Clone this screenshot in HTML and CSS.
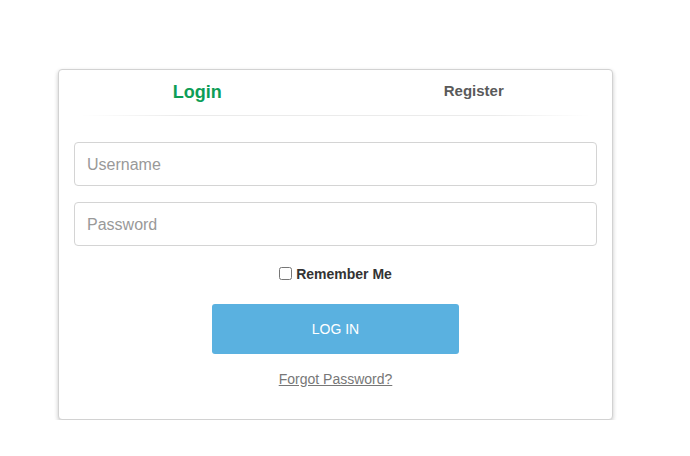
FILE: index.html
```html
<!DOCTYPE html>
<html lang="en">
<head>
<meta charset="utf-8">
<title>Login</title>
<link rel="stylesheet" href="styles.css">
</head>
<body>
<div class="page">
  <div class="card">
    <div class="tabs">
      <div class="tab tab-active">Login</div>
      <div class="tab">Register</div>
    </div>
    <div class="sep"></div>
    <form class="form">
      <input class="field" type="text" placeholder="Username">
      <input class="field" type="password" placeholder="Password">
      <label class="remember"><input type="checkbox" class="check"> Remember Me</label>
      <button type="button" class="btn">LOG IN</button>
      <a href="#" class="forgot">Forgot Password?</a>
    </form>
  </div>
</div>
</body>
</html>
```

FILE: styles.css
```css
* { box-sizing: border-box; }
html, body { margin: 0; background: #fff; }
body { font-family: "Liberation Sans", Arial, sans-serif; }
.page { padding: 69px 0 0 58px; }
.card {
  width: 555px;
  height: 351px;
  border: 1px solid #d2d2d2;
  border-radius: 4px;
  box-shadow: 0 2px 4px rgba(0,0,0,0.22);
  background: #fff;
}
.tabs { display: flex; height: 45px; }
.tab {
  flex: 1;
  display: flex;
  align-items: center;
  justify-content: center;
  font-weight: bold;
  font-size: 15px;
  color: #5a5a5a;
  padding-bottom: 5px;
}
.tab-active { font-size: 18px; color: #0d9e57; padding-bottom: 1px; }
.sep {
  height: 1px;
  margin: 0 22px;
  background: linear-gradient(to right, rgba(230,230,230,0), #ebebeb 20%, #ebebeb 80%, rgba(230,230,230,0));
}
.form {
  display: flex;
  flex-direction: column;
  align-items: center;
  padding: 26px 15px 0;
}
.field {
  width: 100%;
  height: 44px;
  border: 1px solid #d4d4d4;
  border-radius: 4px;
  padding: 2px 12px 0;
  font-family: inherit;
  font-size: 16px;
  color: #333;
  margin-bottom: 16px;
}
.field::placeholder { color: #999; }
.remember {
  display: flex;
  align-items: center;
  font-weight: bold;
  font-size: 14px;
  color: #333;
  height: 22px;
  padding-top: 2px;
  gap: 4px;
}
.check { margin: 0 0 1px; width: 13px; height: 13px; }
.btn {
  margin-top: 20px;
  width: 247px;
  height: 50px;
  border: none;
  border-radius: 3px;
  background: #5ab1e0;
  color: #fff;
  font-family: inherit;
  font-size: 14px;
}
.forgot {
  margin-top: 17px;
  font-size: 14px;
  color: #777;
  text-decoration: underline;
}
```
